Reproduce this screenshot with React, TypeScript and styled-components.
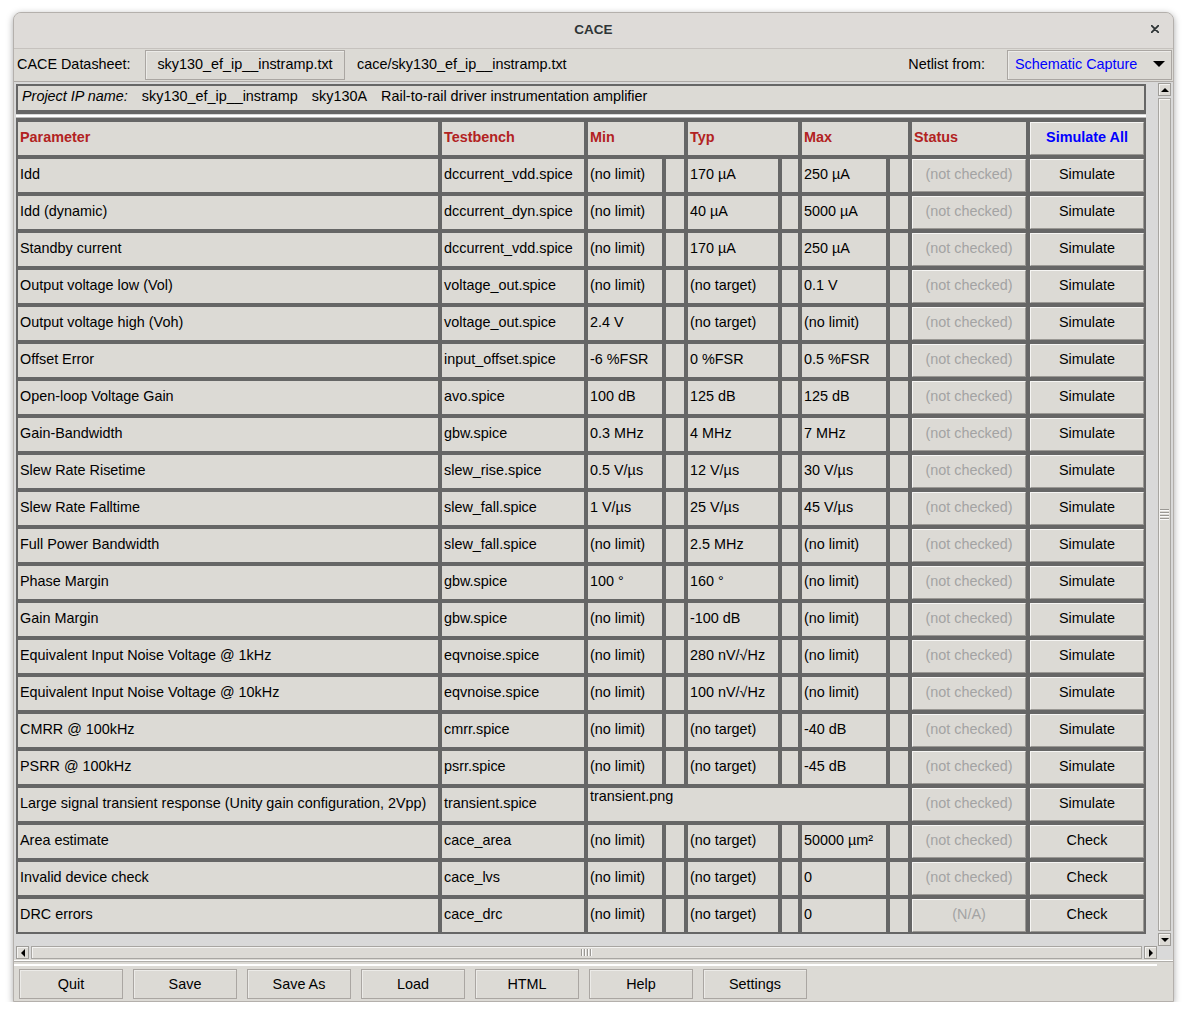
import React from "react";
import styled, { createGlobalStyle } from "styled-components";

const GlobalStyle = createGlobalStyle`
  html, body { margin: 0; padding: 0; background: #ffffff; }
  body { font-family: "Liberation Sans", Arial, sans-serif; font-size: 14.4px; color: #000; }
  * { box-sizing: border-box; }
`;

const CELL_BG = "#dcdad5";
const GRID_DARK = "#666666";
const RED = "#b22222";

const Page = styled.div`
  padding: 12px 0 0 13px;
`;

const Window = styled.div`
  width: 1161px;
  height: 990px;
  border: 1px solid #b4b0ac;
  border-radius: 8px 8px 0 0;
  background: ${CELL_BG};
  box-shadow: 0 2px 7px rgba(0, 0, 0, 0.35);
  display: flex;
  flex-direction: column;
  overflow: hidden;
`;

const TitleBar = styled.div`
  height: 36px;
  flex: none;
  border-bottom: 1px solid #c6c2be;
  background: #dedbd8;
  display: flex;
  align-items: center;
  justify-content: center;
  position: relative;
  padding-bottom: 3px;
`;

const Title = styled.span`
  font-weight: 700;
  font-size: 13.5px;
  color: #2e3436;
`;

const CloseButton = styled.span`
  position: absolute;
  right: 14px;
  top: 12px;
  width: 8px;
  height: 8px;
  display: flex;
`;

const Toolbar = styled.div`
  height: 33px;
  flex: none;
  border-bottom: 1px solid #aeaaa6;
  display: flex;
  align-items: center;
  padding: 0 1px 1px 3px;
`;

const ToolLabel = styled.span`
  width: 128px;
  flex: none;
  padding-bottom: 2px;
`;

const RaisedButton = styled.div<{ $w: number }>`
  width: ${(p) => p.$w}px;
  height: 30px;
  flex: none;
  border: 1px solid #aaa6a2;
  background: ${CELL_BG};
  display: flex;
  align-items: center;
  justify-content: center;
  padding-bottom: 2px;
  box-shadow: inset 1px 1px 0 #ecebe8;
`;

const BarButton = styled(RaisedButton)`
  padding-bottom: 0;
`;

const PathText = styled.span`
  margin-left: 12px;
  padding-bottom: 2px;
`;

const Spacer = styled.div`
  flex: 1;
`;

const NetlistLabel = styled.span`
  margin-right: 22px;
  padding-bottom: 2px;
`;

const Dropdown = styled.div`
  width: 165px;
  height: 30px;
  flex: none;
  border: 1px solid #aaa6a2;
  background: ${CELL_BG};
  display: flex;
  align-items: center;
  padding: 0 6px 2px 7px;
  color: #0000ff;
  box-shadow: inset 1px 1px 0 #ecebe8;
`;

const DropArrow = styled.span`
  margin-left: auto;
  width: 0;
  height: 0;
  border-left: 6px solid transparent;
  border-right: 6px solid transparent;
  border-top: 6px solid #000;
`;

const ScrollArea = styled.div`
  height: 877px;
  flex: none;
  display: grid;
  grid-template-columns: 1143px 15px;
  grid-template-rows: 864px 13px;
  background: #d9d9d9;
`;

const Canvas = styled.div`
  overflow: hidden;
  padding: 2px 0 0 2px;
  background: #d9d9d9;
`;

const Table = styled.div`
  display: grid;
  width: 1130px;
  grid-template-columns: 420px 142px 74px 18px 90px 16px 84px 18px 114px 114px;
  grid-template-rows: 24px 4px repeat(22, 33px);
  gap: 4px;
  padding: 2px;
  background: ${GRID_DARK};
`;

const ProjectRow = styled.div`
  grid-column: 1 / -1;
  background: ${CELL_BG};
  display: flex;
  align-items: center;
  gap: 14px;
  padding: 0 0 4px 4px;
`;

const ProjectLabel = styled.span`
  font-style: italic;
`;

const Separator = styled.div`
  grid-column: 1 / -1;
  margin: 0 -2px;
  background: #ffffff;
  border-top: 1px solid #d9d9d9;
  border-bottom: 1px solid #b8b8b8;
`;

const Cell = styled.div<{ $span?: number; $top?: boolean }>`
  grid-column: span ${(p) => p.$span ?? 1};
  background: ${CELL_BG};
  display: flex;
  align-items: ${(p) => (p.$top ? "flex-start" : "center")};
  padding: ${(p) => (p.$top ? "0 2px" : "0 2px 4px 2px")};
  white-space: nowrap;
  overflow: hidden;
`;

const HeaderCell = styled(Cell)`
  color: ${RED};
  font-weight: 700;
`;

const CellButton = styled.div<{ $tone: "muted" | "normal" | "accent" }>`
  background: ${CELL_BG};
  border: 1px solid;
  border-color: #f6f5f3 #9a9894 #9a9894 #f6f5f3;
  display: flex;
  align-items: center;
  justify-content: center;
  padding-bottom: 3px;
  white-space: nowrap;
  color: ${(p) => (p.$tone === "muted" ? "#a3a3a3" : p.$tone === "accent" ? "#0000ff" : "#000")};
  font-weight: ${(p) => (p.$tone === "accent" ? 700 : 400)};
`;

const VScroll = styled.div`
  display: flex;
  flex-direction: column;
  gap: 2px;
  padding: 1px 1px 0 1px;
  background: #d9d9d9;
`;

const HScroll = styled.div`
  display: flex;
  gap: 2px;
  padding: 0 0 0 2px;
  background: #d9d9d9;
`;

const ScrollCorner = styled.div`
  background: #d9d9d9;
`;

const ArrowBox = styled.div`
  width: 13px;
  height: 13px;
  flex: none;
  border: 1px solid #9e9c98;
  background: ${CELL_BG};
  display: flex;
  align-items: center;
  justify-content: center;
  box-shadow: inset 1px 1px 0 #f4f3f1;
`;

const Tri = styled.span<{ $dir: "up" | "down" | "left" | "right" }>`
  width: 0;
  height: 0;
  ${(p) =>
    p.$dir === "up"
      ? "border-left: 4px solid transparent; border-right: 4px solid transparent; border-bottom: 4px solid #000;"
      : p.$dir === "down"
      ? "border-left: 4px solid transparent; border-right: 4px solid transparent; border-top: 4px solid #000;"
      : p.$dir === "left"
      ? "border-top: 4px solid transparent; border-bottom: 4px solid transparent; border-right: 4px solid #000;"
      : "border-top: 4px solid transparent; border-bottom: 4px solid transparent; border-left: 4px solid #000;"}
`;

const Thumb = styled.div<{ $vertical?: boolean }>`
  flex: 1;
  border: 1px solid #a8a6a2;
  background: ${CELL_BG};
  box-shadow: inset 1px 1px 0 #f4f3f1;
  display: flex;
  align-items: center;
  justify-content: center;
  flex-direction: ${(p) => (p.$vertical ? "column" : "row")};
  gap: 1px;
`;

const GripLine = styled.span<{ $vertical?: boolean }>`
  ${(p) =>
    p.$vertical
      ? "width: 9px; height: 1px; border-bottom: 1px solid #fafafa; box-sizing: content-box;"
      : "width: 1px; height: 7px; border-right: 1px solid #fafafa; box-sizing: content-box;"}
  background: #9a9894;
`;

const Sash = styled.div`
  height: 9px;
  flex: none;
  padding-top: 1px;
  display: flex;
  flex-direction: column;
  gap: 2px;
`;

const SashLine = styled.div<{ $short?: boolean }>`
  height: 2px;
  background: #ffffff;
  margin-right: ${(p) => (p.$short ? "16px" : "0")};
  border-bottom: ${(p) => (p.$short ? "none" : "1px solid #b0aeaa")};
`;

const ButtonBar = styled.div`
  flex: 1;
  display: flex;
  gap: 10px;
  padding: 1px 0 0 5px;
`;

type Row = {
  name: string;
  tb: string;
  min?: string;
  typ?: string;
  max?: string;
  span?: string;
  status?: string;
  action?: string;
};

const rows: Row[] = [
  { name: "Idd", tb: "dccurrent_vdd.spice", min: "(no limit)", typ: "170 µA", max: "250 µA" },
  { name: "Idd (dynamic)", tb: "dccurrent_dyn.spice", min: "(no limit)", typ: "40 µA", max: "5000 µA" },
  { name: "Standby current", tb: "dccurrent_vdd.spice", min: "(no limit)", typ: "170 µA", max: "250 µA" },
  { name: "Output voltage low (Vol)", tb: "voltage_out.spice", min: "(no limit)", typ: "(no target)", max: "0.1 V" },
  { name: "Output voltage high (Voh)", tb: "voltage_out.spice", min: "2.4 V", typ: "(no target)", max: "(no limit)" },
  { name: "Offset Error", tb: "input_offset.spice", min: "-6 %FSR", typ: "0 %FSR", max: "0.5 %FSR" },
  { name: "Open-loop Voltage Gain", tb: "avo.spice", min: "100 dB", typ: "125 dB", max: "125 dB" },
  { name: "Gain-Bandwidth", tb: "gbw.spice", min: "0.3 MHz", typ: "4 MHz", max: "7 MHz" },
  { name: "Slew Rate Risetime", tb: "slew_rise.spice", min: "0.5 V/µs", typ: "12 V/µs", max: "30 V/µs" },
  { name: "Slew Rate Falltime", tb: "slew_fall.spice", min: "1 V/µs", typ: "25 V/µs", max: "45 V/µs" },
  { name: "Full Power Bandwidth", tb: "slew_fall.spice", min: "(no limit)", typ: "2.5 MHz", max: "(no limit)" },
  { name: "Phase Margin", tb: "gbw.spice", min: "100 °", typ: "160 °", max: "(no limit)" },
  { name: "Gain Margin", tb: "gbw.spice", min: "(no limit)", typ: "-100 dB", max: "(no limit)" },
  { name: "Equivalent Input Noise Voltage @ 1kHz", tb: "eqvnoise.spice", min: "(no limit)", typ: "280 nV/√Hz", max: "(no limit)" },
  { name: "Equivalent Input Noise Voltage @ 10kHz", tb: "eqvnoise.spice", min: "(no limit)", typ: "100 nV/√Hz", max: "(no limit)" },
  { name: "CMRR @ 100kHz", tb: "cmrr.spice", min: "(no limit)", typ: "(no target)", max: "-40 dB" },
  { name: "PSRR @ 100kHz", tb: "psrr.spice", min: "(no limit)", typ: "(no target)", max: "-45 dB" },
  { name: "Large signal transient response (Unity gain configuration, 2Vpp)", tb: "transient.spice", span: "transient.png" },
  { name: "Area estimate", tb: "cace_area", min: "(no limit)", typ: "(no target)", max: "50000 µm²", action: "Check" },
  { name: "Invalid device check", tb: "cace_lvs", min: "(no limit)", typ: "(no target)", max: "0", action: "Check" },
  { name: "DRC errors", tb: "cace_drc", min: "(no limit)", typ: "(no target)", max: "0", status: "(N/A)", action: "Check" },
];

const bottomButtons = ["Quit", "Save", "Save As", "Load", "HTML", "Help", "Settings"];

export default function App() {
  return (
    <>
      <GlobalStyle />
      <Page>
        <Window>
          <TitleBar>
            <Title>CACE</Title>
            <CloseButton>
              <svg width="8" height="8" viewBox="0 0 8 8">
                <path d="M0.5 0.5 L7.5 7.5 M7.5 0.5 L0.5 7.5" stroke="#2e3436" strokeWidth="1.8" strokeLinecap="round" />
              </svg>
            </CloseButton>
          </TitleBar>
          <Toolbar>
            <ToolLabel>CACE Datasheet:</ToolLabel>
            <RaisedButton $w={200}>sky130_ef_ip__instramp.txt</RaisedButton>
            <PathText>cace/sky130_ef_ip__instramp.txt</PathText>
            <Spacer />
            <NetlistLabel>Netlist from:</NetlistLabel>
            <Dropdown>
              Schematic Capture
              <DropArrow />
            </Dropdown>
          </Toolbar>
          <ScrollArea>
            <Canvas>
              <Table>
                <ProjectRow>
                  <ProjectLabel>Project IP name:</ProjectLabel>
                  <span>sky130_ef_ip__instramp</span>
                  <span>sky130A</span>
                  <span>Rail-to-rail driver instrumentation amplifier</span>
                </ProjectRow>
                <Separator />
                <HeaderCell>Parameter</HeaderCell>
                <HeaderCell>Testbench</HeaderCell>
                <HeaderCell $span={2}>Min</HeaderCell>
                <HeaderCell $span={2}>Typ</HeaderCell>
                <HeaderCell $span={2}>Max</HeaderCell>
                <HeaderCell>Status</HeaderCell>
                <CellButton $tone="accent">Simulate All</CellButton>
                {rows.map((r) => (
                  <React.Fragment key={r.name}>
                    <Cell>{r.name}</Cell>
                    <Cell>{r.tb}</Cell>
                    {r.span ? (
                      <Cell $span={6} $top>
                        {r.span}
                      </Cell>
                    ) : (
                      <>
                        <Cell>{r.min}</Cell>
                        <Cell />
                        <Cell>{r.typ}</Cell>
                        <Cell />
                        <Cell>{r.max}</Cell>
                        <Cell />
                      </>
                    )}
                    <CellButton $tone="muted">{r.status ?? "(not checked)"}</CellButton>
                    <CellButton $tone="normal">{r.action ?? "Simulate"}</CellButton>
                  </React.Fragment>
                ))}
              </Table>
            </Canvas>
            <VScroll>
              <ArrowBox>
                <Tri $dir="up" />
              </ArrowBox>
              <Thumb $vertical>
                <GripLine $vertical />
                <GripLine $vertical />
                <GripLine $vertical />
                <GripLine $vertical />
              </Thumb>
              <ArrowBox>
                <Tri $dir="down" />
              </ArrowBox>
            </VScroll>
            <HScroll>
              <ArrowBox>
                <Tri $dir="left" />
              </ArrowBox>
              <Thumb>
                <GripLine />
                <GripLine />
                <GripLine />
                <GripLine />
              </Thumb>
              <ArrowBox>
                <Tri $dir="right" />
              </ArrowBox>
            </HScroll>
            <ScrollCorner />
          </ScrollArea>
          <Sash>
            <SashLine />
            <SashLine $short />
          </Sash>
          <ButtonBar>
            {bottomButtons.map((b) => (
              <BarButton key={b} $w={104}>
                {b}
              </BarButton>
            ))}
          </ButtonBar>
        </Window>
      </Page>
    </>
  );
}
